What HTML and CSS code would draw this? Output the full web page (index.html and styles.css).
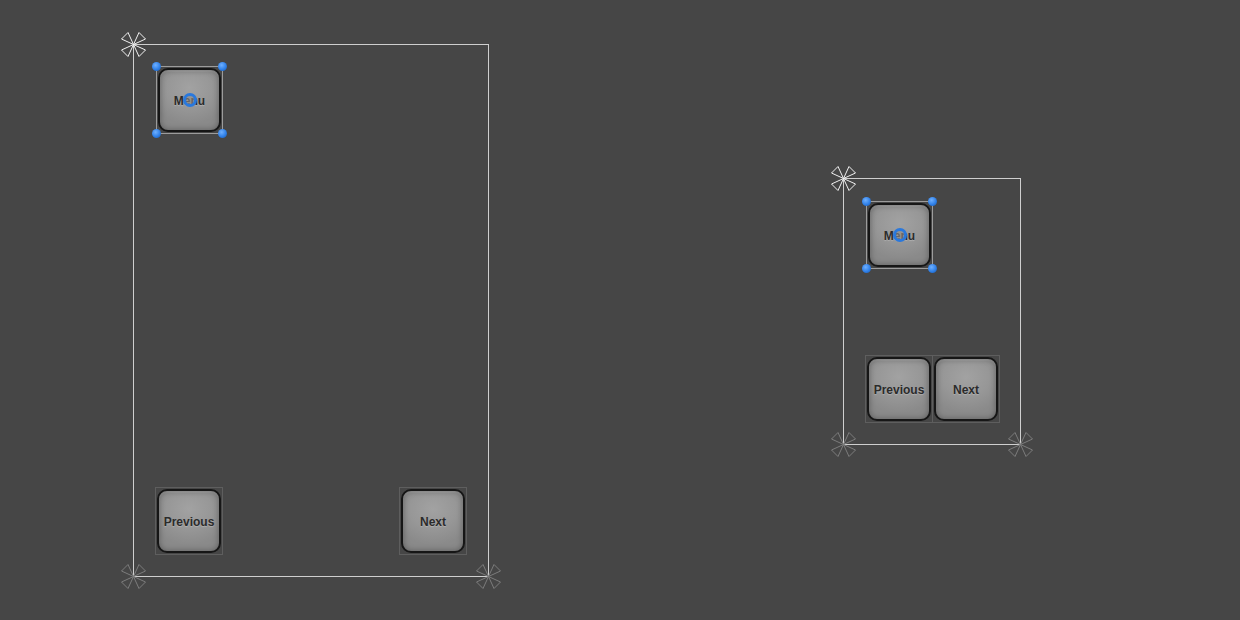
FILE: index.html
```html
<!DOCTYPE html>
<html lang="en">
<head>
    <meta charset="UTF-8">
    <meta name="viewport" content="width=device-width, initial-scale=1.0">
    <title>Scene</title>
    <link rel="stylesheet" href="styles.css">
</head>

<body>
    <div class="scene">
        <!-- 竖屏画布 -->
        <div class="canvas canvas_tall">
            <svg class="anchor anchor_tl" viewBox="0 0 27 27"><use href="#petals"/></svg>
            <svg class="anchor anchor_bl dim" viewBox="0 0 27 27"><use href="#petals"/></svg>
            <svg class="anchor anchor_br dim" viewBox="0 0 27 27"><use href="#petals"/></svg>

            <div class="rect selected tall_menu">
                <div class="btn">Menu</div>
                <span class="handle h_tl"></span><span class="handle h_tr"></span>
                <span class="handle h_bl"></span><span class="handle h_br"></span>
                <span class="pivot"></span>
            </div>
            <div class="rect tall_prev"><div class="btn">Previous</div></div>
            <div class="rect tall_next"><div class="btn">Next</div></div>
        </div>

        <!-- 小画布 -->
        <div class="canvas canvas_small">
            <svg class="anchor anchor_tl" viewBox="0 0 27 27"><use href="#petals"/></svg>
            <svg class="anchor anchor_bl dim" viewBox="0 0 27 27"><use href="#petals"/></svg>
            <svg class="anchor anchor_br dim" viewBox="0 0 27 27"><use href="#petals"/></svg>

            <div class="rect selected small_menu">
                <div class="btn">Menu</div>
                <span class="handle h_tl"></span><span class="handle h_tr"></span>
                <span class="handle h_bl"></span><span class="handle h_br"></span>
                <span class="pivot"></span>
            </div>
            <div class="rect small_prev"><div class="btn">Previous</div></div>
            <div class="rect small_next"><div class="btn">Next</div></div>
        </div>
    </div>

    <svg width="0" height="0" style="position:absolute">
        <defs>
            <g id="petals">
                <polygon points="13.5,13.5 1.5,8 8,1.5"/>
                <polygon points="13.5,13.5 25.5,8 19,1.5"/>
                <polygon points="13.5,13.5 1.5,19 8,25.5"/>
                <polygon points="13.5,13.5 25.5,19 19,25.5"/>
            </g>
        </defs>
    </svg>
</body>
</html>
```

FILE: styles.css
```css
body{
    margin: 0;
    background-color: #464646;
    font-family: "Liberation Sans", Arial, sans-serif;
}
.scene{
    position: relative;
    width: 1240px;
    height: 620px;
    overflow: hidden;
}

/* 画布边框 */
.canvas{
    position: absolute;
    border: 1px solid #cfcfcf;
}
.canvas_tall{
    left: 133px;
    top: 44px;
    width: 354px;
    height: 531px;
}
.canvas_small{
    left: 843px;
    top: 178px;
    width: 176px;
    height: 265px;
}

/* 锚点 */
.anchor{
    position: absolute;
    width: 27px;
    height: 27px;
    fill: none;
    stroke: #f2f2f2;
    stroke-width: 1;
    stroke-linejoin: round;
    z-index: 5;
}
.anchor.dim{
    stroke: #7c7c7c;
}
.anchor_tl{ left: -14px; top: -14px; }
.anchor_bl{ left: -14px; bottom: -14px; }
.anchor_br{ right: -14px; bottom: -14px; }

/* RectTransform */
.rect{
    position: absolute;
    box-sizing: border-box;
    width: 68px;
    height: 68px;
    border: 1px solid #5e5e5e;
}
.rect.selected{
    width: 67px;
    height: 68px;
    border-color: #9c9c9c;
}
.tall_menu{ left: 22px; top: 21px; }
.tall_prev{ left: 21px; top: 442px; }
.tall_next{ left: 265px; top: 442px; }
.small_menu{ left: 22px; top: 22px; }
.small_prev{ left: 21px; top: 176px; }
.small_next{ left: 88px; top: 176px; }

.btn{
    position: absolute;
    left: 1px;
    top: 1px;
    right: 1px;
    bottom: 1px;
    box-sizing: border-box;
    padding-top: 2px;
    border: 2px solid #161616;
    border-radius: 10px;
    background: radial-gradient(ellipse 70% 60% at 50% 30%, #a2a2a2 0%, #979797 55%, #8a8a8a 100%);
    box-shadow: inset 0 0 6px rgba(0, 0, 0, 0.35), inset 0 2px 1px rgba(255, 255, 255, 0.12);
    display: flex;
    align-items: center;
    justify-content: center;
    font-size: 12px;
    font-weight: bold;
    color: #2b2b2b;
    text-shadow: 0 1px 1px rgba(255, 255, 255, 0.25);
}

/* 选中手柄 */
.handle{
    position: absolute;
    width: 9px;
    height: 9px;
    border-radius: 50%;
    background: radial-gradient(circle at 40% 35%, #6fb0ff 0%, #2f80e8 55%, #1b56a8 100%);
    z-index: 3;
}
.h_tl{ left: -5px; top: -5px; }
.h_tr{ right: -5px; top: -5px; }
.h_bl{ left: -5px; bottom: -5px; }
.h_br{ right: -5px; bottom: -5px; }

.pivot{
    position: absolute;
    left: 50%;
    top: 50%;
    width: 8px;
    height: 8px;
    margin: -7px 0 0 -7px;
    border: 3px solid #2a78dc;
    border-radius: 50%;
    background-color: rgba(140, 140, 140, 0.6);
    z-index: 3;
}
```
